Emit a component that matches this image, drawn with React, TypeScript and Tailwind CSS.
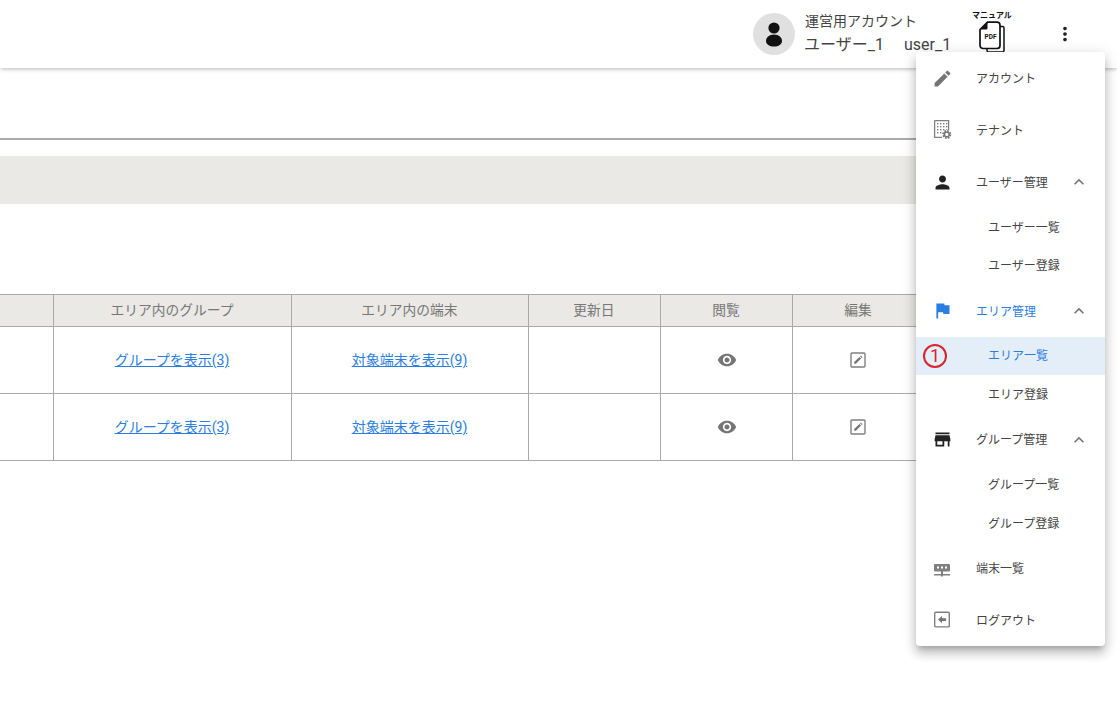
import React from "react";
import { MdEdit, MdPerson, MdFlag, MdStore, MdExpandLess, MdVisibility, MdMoreVert } from "react-icons/md";

const FONT = "font-['Roboto','Noto_Sans_CJK_JP',sans-serif]";

function TenantIcon() {
  return (
    <svg width="24" height="24" viewBox="0 0 24 24" fill="none">
      <path d="M4.6 2.6h14v9.4M4.6 2.6v16.8h7.4" stroke="#808080" strokeWidth="1.3" />
      <g fill="#808080">
        {[5, 8, 11, 14].map((y) =>
          [7, 10, 13, 16].map((x) =>
            x === 16 && y === 14 ? null : <rect key={`${x}-${y}`} x={x} y={y} width="1.4" height="1.4" />
          )
        )}
      </g>
      <circle cx="16.8" cy="16.4" r="4.6" fill="#fff" />
      <circle cx="16.8" cy="16.4" r="3.7" stroke="#757575" strokeWidth="1.6" strokeDasharray="1.7 1.2" />
      <circle cx="16.8" cy="16.4" r="2.4" stroke="#757575" strokeWidth="1.5" />
    </svg>
  );
}

function TerminalIcon() {
  return (
    <svg width="24" height="24" viewBox="0 0 24 24" fill="#808080">
      <path d="M5 8h14a1 1 0 0 1 1 1v5.5a1 1 0 0 1-1 1h-6V18h7v1.6h-7v1h-2v-1H4V18h7v-2.5H5a1 1 0 0 1-1-1V9a1 1 0 0 1 1-1z" />
      <g fill="#fff">
        <rect x="7" y="10.5" width="2" height="2" />
        <rect x="11" y="10.5" width="2" height="2" />
        <rect x="15" y="10.5" width="2" height="2" />
      </g>
    </svg>
  );
}

function LogoutIcon() {
  return (
    <svg width="24" height="24" viewBox="0 0 24 24" fill="none">
      <rect x="4.7" y="4.3" width="14.6" height="14.6" rx="1" stroke="#808080" strokeWidth="1.4" />
      <path d="M8 11.6l4-3.6v2.2h4v2.8h-4v2.2z" fill="#757575" />
    </svg>
  );
}

function EditBoxIcon() {
  return (
    <svg width="18" height="18" viewBox="0 0 18 18" fill="none" className="block mx-auto">
      <rect x="2" y="2" width="14" height="14" rx="1" stroke="#808080" strokeWidth="1.4" />
      <path d="M5.2 12.8v-1.7l5.2-5.2 1.7 1.7-5.2 5.2zM11 5.3l.8-.8 1.7 1.7-.8.8z" fill="#757575" />
    </svg>
  );
}

function PdfIcon() {
  return (
    <svg width="28" height="32" viewBox="0 0 28 32" fill="none">
      <path d="M22 5.5h2.5a1.5 1.5 0 0 1 1.5 1.5v22.5a1.5 1.5 0 0 1-1.5 1.5H10.5a1.5 1.5 0 0 1-1.5-1.5V28" stroke="#111" strokeWidth="1.5" />
      <path d="M9.5 1.2h9.5a3 3 0 0 1 3 3v20.3a3 3 0 0 1-3 3H5a3 3 0 0 1-3-3V8.5z" fill="#fff" stroke="#111" strokeWidth="1.7" />
      <path d="M2.5 8.5l7-7v5.5a1.5 1.5 0 0 1-1.5 1.5z" fill="#111" />
      <text x="12.5" y="17.5" textAnchor="middle" fontSize="6.5" fontWeight="700" fontFamily="Roboto, sans-serif" fill="#111">PDF</text>
    </svg>
  );
}

function MenuRow({ icon, label, chevron, blue }: { icon: React.ReactNode; label: string; chevron?: boolean; blue?: boolean }) {
  return (
    <div className="h-[52px] flex items-center pl-[14px] pr-[16px]">
      <div className="w-[46px] shrink-0 flex items-center">{icon}</div>
      <span className={`flex-1 pt-[1.5px] text-[12px] ${blue ? "text-[#2a7de1]" : "text-[#444444]"}`}>{label}</span>
      {chevron && <MdExpandLess size={20} color="#757575" />}
    </div>
  );
}

function SubRow({ label, active }: { label: string; active?: boolean }) {
  return (
    <div className={`h-[38.4px] flex items-center pt-[1px] pl-[72px] text-[12px] ${active ? "bg-[#e3eef9] text-[#2a7de1]" : "text-[#444444]"}`}>
      {label}
    </div>
  );
}

const th = "border border-[#aaaaaa] bg-[#eae9e5] text-[13.75px] font-normal text-[#777777] h-[32px] p-0";
const td = "border border-[#aaaaaa] h-[67px] p-0 text-center text-[14px]";

function Row() {
  return (
    <tr>
      <td className={`${td} border-l-0`}></td>
      <td className={td}><a className="text-[#2a7de1] underline pb-[2px]">グループを表示(3)</a></td>
      <td className={td}><a className="text-[#2a7de1] underline pb-[2px]">対象端末を表示(9)</a></td>
      <td className={td}></td>
      <td className={td}><MdVisibility size={20} color="#757575" className="block mx-auto translate-x-[1px]" /></td>
      <td className={td}><EditBoxIcon /></td>
    </tr>
  );
}

export default function App() {
  return (
    <div className={`${FONT} relative w-[1117px] h-[716px] overflow-hidden bg-white`}>
      <header className="h-[68px] bg-white shadow-[0_2px_4px_-1px_rgba(0,0,0,0.2),0_1px_5px_0_rgba(0,0,0,0.1)] flex items-center">
        <div className="ml-[753px] w-[42px] h-[42px] rounded-full bg-[#e0e0e0] flex items-center justify-center">
          <svg width="24" height="28" viewBox="0 0 24 28" fill="#111">
            <circle cx="12" cy="8" r="5.6" />
            <path d="M12 14.5c5 0 8 3 8 6.5 0 3.5-3.5 5.5-8 5.5s-8-2-8-5.5c0-3.5 3-6.5 8-6.5z" />
          </svg>
        </div>
        <div className="ml-[10px] w-[167px] text-[#444444]">
          <div className="text-[14px] leading-[18px] mb-[4px]">運営用アカウント</div>
          <div className="text-[16px] leading-[22px] flex -ml-[1px]">
            <span className="w-[100px]">ユーザー_1</span>
            <span>user_1</span>
          </div>
        </div>
        <div className="w-[42px] -ml-[1px] -mt-[4px] flex flex-col items-center">
          <span className="text-[8px] leading-[10px] font-bold text-[#111111] whitespace-nowrap">マニュアル</span>
          <PdfIcon />
        </div>
        <div className="ml-[44px] w-[24px]"><MdMoreVert size={22} color="#222" className="-ml-[3px]" /></div>
      </header>

      <main className="w-[924px]">
        <div className="h-[2px] mt-[70px] bg-[#aaaaaa]"></div>
        <div className="h-[48px] mt-[16px] bg-[#eae9e5]"></div>
        <table className="mt-[90px] w-[924px] table-fixed border-collapse">
          <colgroup>
            <col className="w-[53px]" />
            <col className="w-[238px]" />
            <col className="w-[237px]" />
            <col className="w-[132px]" />
            <col className="w-[132px]" />
            <col className="w-[132px]" />
          </colgroup>
          <thead>
            <tr>
              <th className={`${th} border-l-0`}></th>
              <th className={th}>エリア内のグループ</th>
              <th className={th}>エリア内の端末</th>
              <th className={th}>更新日</th>
              <th className={th}>閲覧</th>
              <th className={th}>編集</th>
            </tr>
          </thead>
          <tbody>
            <Row />
            <Row />
          </tbody>
        </table>
      </main>

      <nav className="absolute left-[916px] top-[52px] w-[189px] rounded-[4px] bg-white shadow-[0_5px_5px_-3px_rgba(0,0,0,0.2),0_8px_10px_1px_rgba(0,0,0,0.14),0_3px_14px_2px_rgba(0,0,0,0.12)]">
        <MenuRow icon={<MdEdit size={21} color="#757575" className="ml-[2px]" />} label="アカウント" />
        <MenuRow icon={<TenantIcon />} label="テナント" />
        <MenuRow icon={<MdPerson size={21} color="#222" className="ml-[2px]" />} label="ユーザー管理" chevron />
        <SubRow label="ユーザー一覧" />
        <SubRow label="ユーザー登録" />
        <MenuRow icon={<MdFlag size={21} color="#2a7de1" className="ml-[2px]" />} label="エリア管理" chevron blue />
        <div className="relative">
          <SubRow label="エリア一覧" active />
          <div className="absolute left-[7px] top-[7px] w-[24px] h-[24px] rounded-full border-2 border-[#d9232e] flex items-center justify-center text-[#d9232e] text-[18px] leading-none">1</div>
        </div>
        <SubRow label="エリア登録" />
        <MenuRow icon={<MdStore size={21} color="#222" className="ml-[2px]" />} label="グループ管理" chevron />
        <SubRow label="グループ一覧" />
        <SubRow label="グループ登録" />
        <MenuRow icon={<TerminalIcon />} label="端末一覧" />
        <MenuRow icon={<LogoutIcon />} label="ログアウト" />
      </nav>
    </div>
  );
}
